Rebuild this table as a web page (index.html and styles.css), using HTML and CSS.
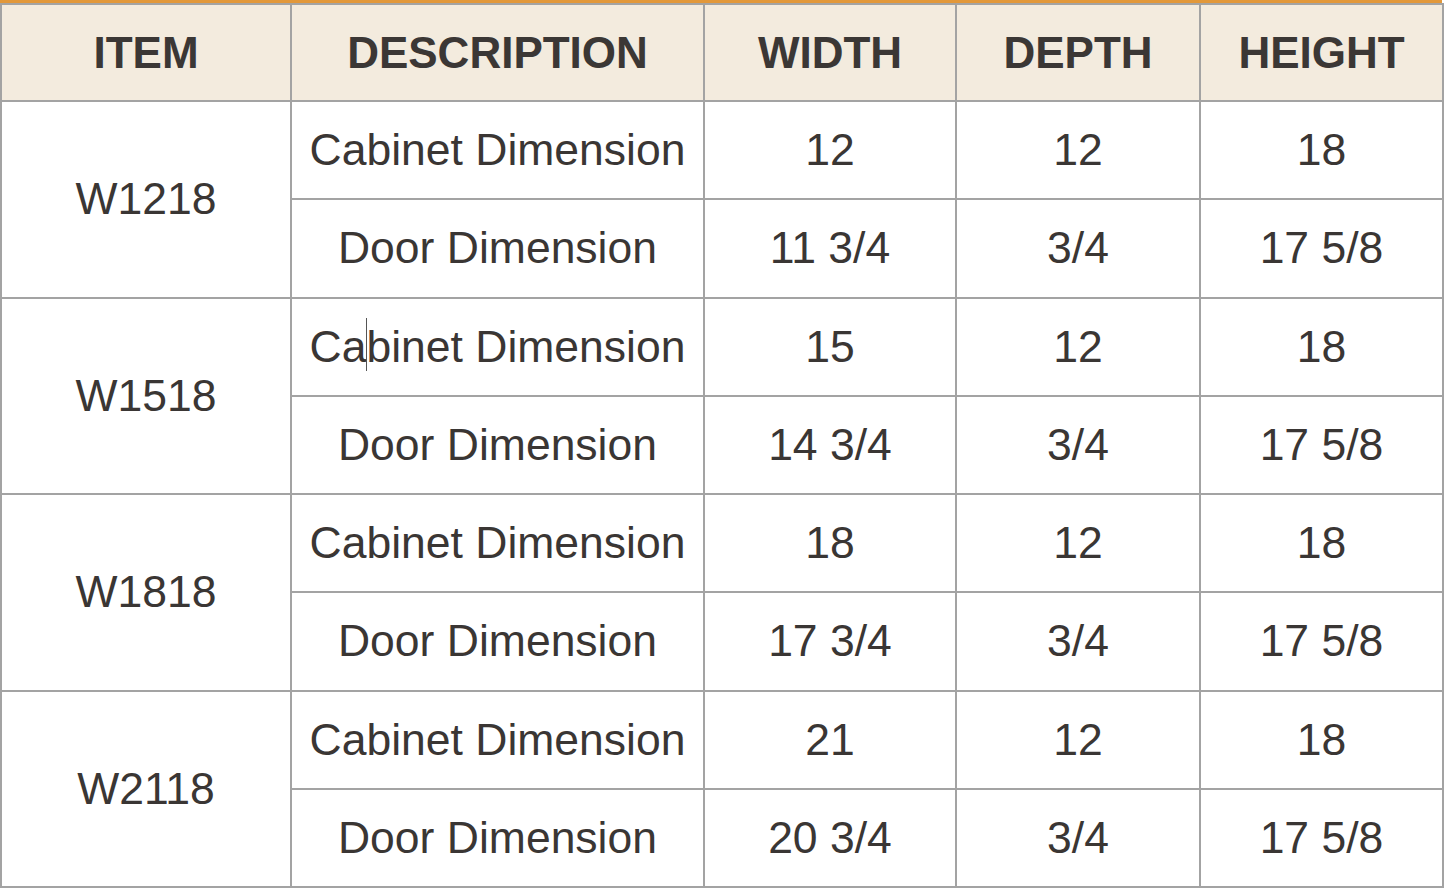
FILE: index.html
```html
<!DOCTYPE html>
<html>
<head>
<meta charset="utf-8">
<link rel="stylesheet" href="styles.css">
<title>Wall Cabinet Dimensions</title>
</head>
<body>
<div class="sheet">
<table class="dims">
<colgroup>
<col class="c-item"><col class="c-desc"><col class="c-w"><col class="c-d"><col class="c-h">
</colgroup>
<thead>
<tr><th>ITEM</th><th>DESCRIPTION</th><th>WIDTH</th><th>DEPTH</th><th>HEIGHT</th></tr>
</thead>
<tbody>
<tr><td rowspan="2" class="item">W1218</td><td class="desc">Cabinet Dimension</td><td>12</td><td>12</td><td>18</td></tr>
<tr><td class="desc">Door Dimension</td><td>11 3/4</td><td>3/4</td><td>17 5/8</td></tr>
<tr><td rowspan="2" class="item">W1518</td><td class="desc"><span class="caret-wrap">Ca<span class="caret"></span>binet</span> Dimension</td><td>15</td><td>12</td><td>18</td></tr>
<tr><td class="desc">Door Dimension</td><td>14 3/4</td><td>3/4</td><td>17 5/8</td></tr>
<tr><td rowspan="2" class="item">W1818</td><td class="desc">Cabinet Dimension</td><td>18</td><td>12</td><td>18</td></tr>
<tr><td class="desc">Door Dimension</td><td>17 3/4</td><td>3/4</td><td>17 5/8</td></tr>
<tr><td rowspan="2" class="item">W2118</td><td class="desc">Cabinet Dimension</td><td>21</td><td>12</td><td>18</td></tr>
<tr><td class="desc">Door Dimension</td><td>20 3/4</td><td>3/4</td><td>17 5/8</td></tr>
</tbody>
</table>
</div>
</body>
</html>
```
FILE: styles.css
```css
html, body {
  margin: 0;
  padding: 0;
  background: #ffffff;
}
.sheet {
  width: 1442px;
  border-top: 3px solid #e2983a;
}
.dims {
  width: 1442px;
  table-layout: fixed;
  border-collapse: collapse;
  font-family: "Liberation Sans", Arial, sans-serif;
  color: #3a3634;
}
.c-item { width: 290px; }
.c-desc { width: 413px; }
.c-w { width: 252px; }
.c-d { width: 244px; }
.c-h { width: 243px; }
.dims th, .dims td {
  border: 2px solid #a3a3a3;
  text-align: center;
  vertical-align: middle;
  padding: 0;
}
.dims th {
  background: #f3ebde;
  height: 95px;
  font-size: 44px;
  font-weight: bold;
  color: #3b3735;
}
.dims td {
  height: 96.25px;
  font-size: 44.5px;
}
.caret-wrap {
  position: relative;
}
.caret {
  position: absolute;
  left: 56px;
  top: -4px;
  width: 1px;
  height: 53px;
  background: #555;
}
```
